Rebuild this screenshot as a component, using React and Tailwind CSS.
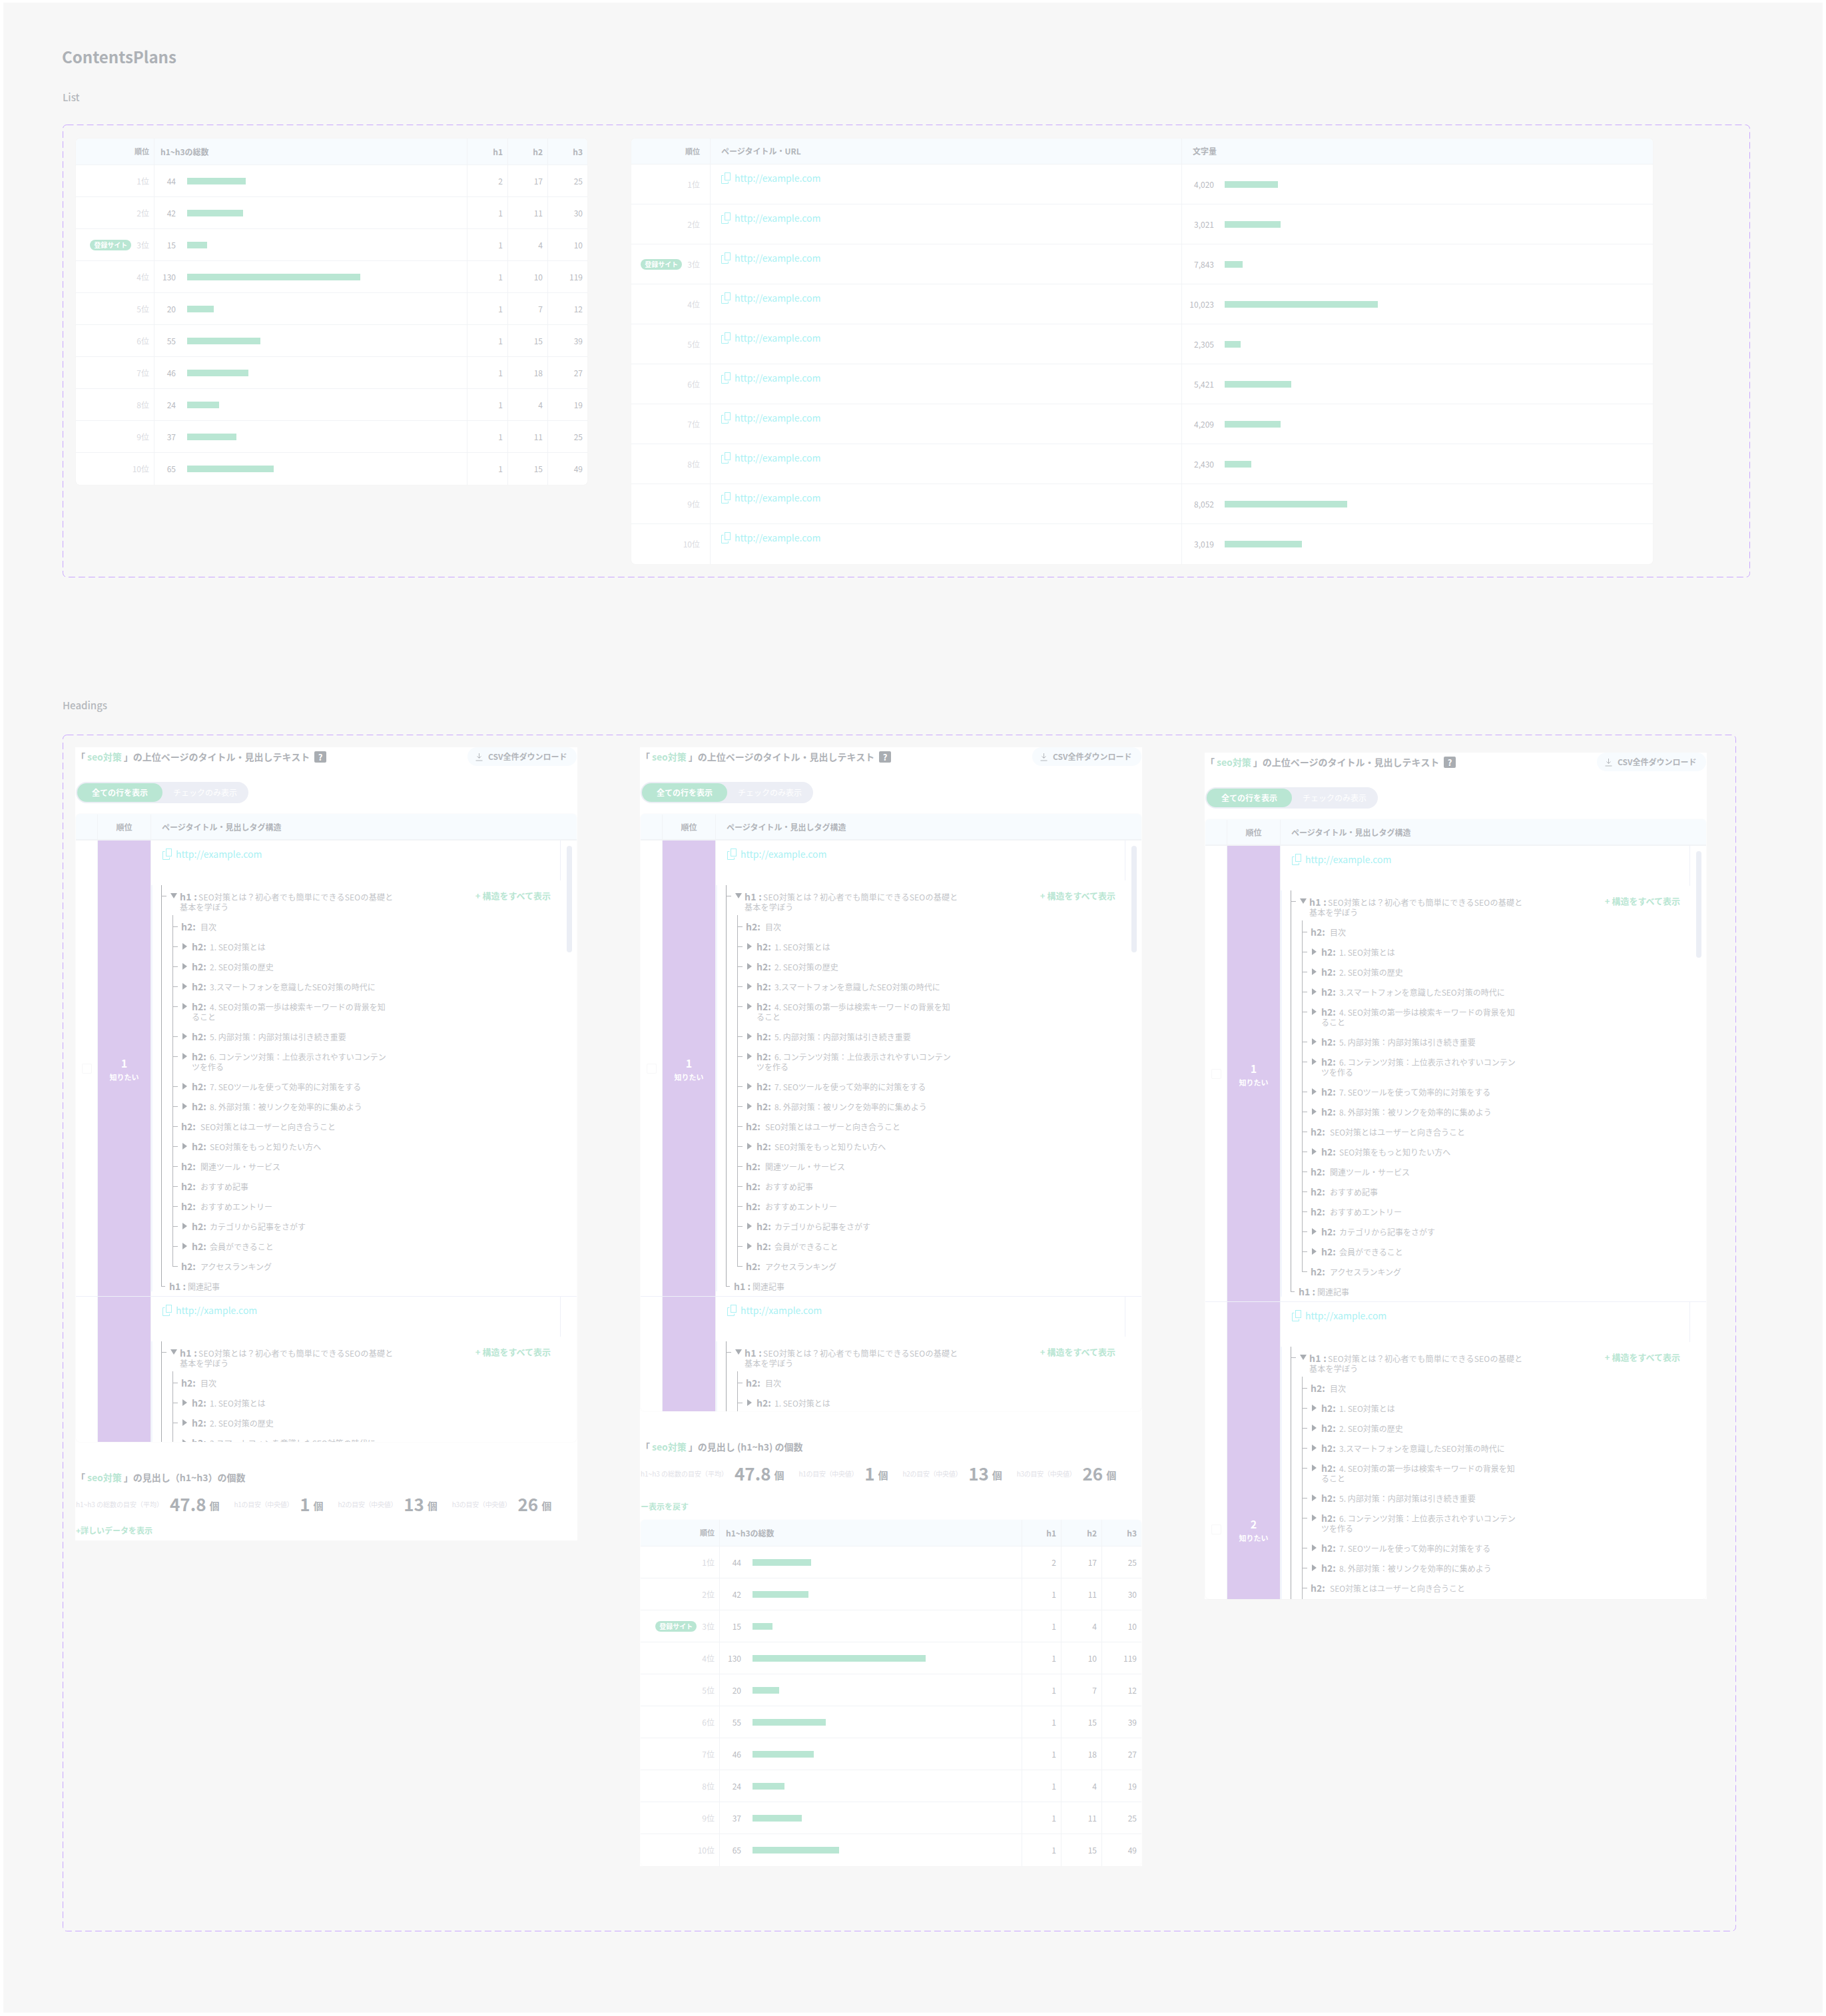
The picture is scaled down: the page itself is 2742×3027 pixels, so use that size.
import React from 'react';

const countRows = [
    { rank: 1, total: 44, h1: 2, h2: 17, h3: 25 },
    { rank: 2, total: 42, h1: 1, h2: 11, h3: 30 },
    { rank: 3, total: 15, h1: 1, h2: 4, h3: 10, own: true },
    { rank: 4, total: 130, h1: 1, h2: 10, h3: 119 },
    { rank: 5, total: 20, h1: 1, h2: 7, h3: 12 },
    { rank: 6, total: 55, h1: 1, h2: 15, h3: 39 },
    { rank: 7, total: 46, h1: 1, h2: 18, h3: 27 },
    { rank: 8, total: 24, h1: 1, h2: 4, h3: 19 },
    { rank: 9, total: 37, h1: 1, h2: 11, h3: 25 },
    { rank: 10, total: 65, h1: 1, h2: 15, h3: 49 },
];

const pageRows = [
    { rank: 1, chars: '4,020', bar: 80 },
    { rank: 2, chars: '3,021', bar: 84 },
    { rank: 3, chars: '7,843', bar: 27, own: true },
    { rank: 4, chars: '10,023', bar: 230 },
    { rank: 5, chars: '2,305', bar: 24 },
    { rank: 6, chars: '5,421', bar: 100 },
    { rank: 7, chars: '4,209', bar: 84 },
    { rank: 8, chars: '2,430', bar: 40 },
    { rank: 9, chars: '8,052', bar: 184 },
    { rank: 10, chars: '3,019', bar: 116 },
];

const h2Items = [
    { text: '目次' },
    { text: '1. SEO対策とは', more: true },
    { text: '2. SEO対策の歴史', more: true },
    { text: '3.スマートフォンを意識したSEO対策の時代に', more: true },
    { text: '4. SEO対策の第一歩は検索キーワードの背景を知ること', more: true },
    { text: '5. 内部対策：内部対策は引き続き重要', more: true },
    { text: '6. コンテンツ対策：上位表示されやすいコンテンツを作る', more: true },
    { text: '7. SEOツールを使って効率的に対策をする', more: true },
    { text: '8. 外部対策：被リンクを効率的に集めよう', more: true },
    { text: 'SEO対策とはユーザーと向き合うこと' },
    { text: 'SEO対策をもっと知りたい方へ', more: true },
    { text: '関連ツール・サービス' },
    { text: 'おすすめ記事' },
    { text: 'おすすめエントリー' },
    { text: 'カテゴリから記事をさがす', more: true },
    { text: '会員ができること', more: true },
    { text: 'アクセスランキング' },
];

const DashedFrame = () => (
    <svg className="absolute inset-0 w-full h-full overflow-visible pointer-events-none">
        <rect x="0.5" y="0.5" width="100%" height="100%" rx="6" fill="none" stroke="#c9a6ff" strokeDasharray="10 5" />
    </svg>
);

const Badge = () => (
    <span className="inline-flex items-center justify-center w-[62px] h-[16px] rounded-full bg-[#b9e6d3] text-white text-[10px] leading-none font-bold">登録サイト</span>
);

const LinkIcon = () => (
    <svg width="14" height="17" viewBox="0 0 14 17" fill="none" stroke="#a9f1f3" className="shrink-0">
        <path d="M3.5 4.5H.5V16.5H10.5V13.5" />
        <rect x="5.5" y="0.5" width="8" height="11" />
    </svg>
);

const UrlLink = ({ url }) => (
    <div className="flex items-center gap-[6px] text-[14px] leading-[20px] text-[#a9f1f3]">
        <LinkIcon />
        <span>{url}</span>
    </div>
);

const Cell = ({ className, children }) => (
    <div className={`flex items-center border-r border-[#f1f3f6] last:border-r-0 ${className}`}>{children}</div>
);

const CountTable = ({ cols }) => (
    <div className="w-full rounded-[6px] overflow-hidden bg-white shadow-[0_0_2px_rgba(0,0,0,0.04)]">
        <div className="flex h-[40px] bg-[#f7fbfe] border-b border-[#f1f3f6] text-[12px] font-bold text-[#b2b5ba]">
            <Cell className={`${cols[0]} justify-end pr-[7px] text-[11px]`}>順位</Cell>
            <Cell className={`${cols[1]} pl-[9px]`}>h1~h3の総数</Cell>
            <Cell className={`${cols[2]} justify-end pr-[7px]`}>h1</Cell>
            <Cell className={`${cols[3]} justify-end pr-[7px]`}>h2</Cell>
            <Cell className={`${cols[4]} justify-end pr-[7px]`}>h3</Cell>
        </div>
        {countRows.map((row) => (
            <div key={row.rank} className="flex h-[48px] border-b border-[#f1f3f6] last:border-b-0 text-[12px] text-[#b8babf]">
                <Cell className={`${cols[0]} justify-end gap-[8px] pr-[7px] text-[#d9dae0]`}>
                    {row.own && <Badge />}
                    <span>{row.rank}位</span>
                </Cell>
                <Cell className={cols[1]}>
                    <span className="w-[32px] text-right">{row.total}</span>
                    <span className="ml-[17px] h-[10px] bg-[#b9e6d3]" style={{ width: row.total * 2 }} />
                </Cell>
                <Cell className={`${cols[2]} justify-end pr-[7px]`}>{row.h1}</Cell>
                <Cell className={`${cols[3]} justify-end pr-[7px]`}>{row.h2}</Cell>
                <Cell className={`${cols[4]} justify-end pr-[7px]`}>{row.h3}</Cell>
            </div>
        ))}
    </div>
);

const PageTable = () => (
    <div className="w-[1534px] rounded-[6px] overflow-hidden bg-white shadow-[0_0_2px_rgba(0,0,0,0.04)]">
        <div className="flex h-[39px] bg-[#f7fbfe] border-b border-[#f1f3f6] text-[12px] font-bold text-[#b2b5ba]">
            <Cell className="w-[119px] justify-end pr-[15px] text-[11px]">順位</Cell>
            <Cell className="w-[708px] pl-[16px]">ページタイトル・URL</Cell>
            <Cell className="flex-1 pl-[16px]">文字量</Cell>
        </div>
        {pageRows.map((row) => (
            <div key={row.rank} className="flex h-[60px] border-b border-[#f1f3f6] last:border-b-0 text-[12px] text-[#b8babf]">
                <Cell className="w-[119px] justify-end gap-[8px] pr-[15px] text-[#d9dae0]">
                    {row.own && <Badge />}
                    <span>{row.rank}位</span>
                </Cell>
                <div className="w-[708px] pl-[16px] pt-[10px] border-r border-[#f1f3f6]">
                    <UrlLink url="http://example.com" />
                </div>
                <div className="flex-1 flex items-center">
                    <span className="w-[48px] text-right">{row.chars}</span>
                    <span className="ml-[16px] h-[10px] bg-[#b9e6d3]" style={{ width: row.bar }} />
                </div>
            </div>
        ))}
    </div>
);

const Triangle = ({ down }) => (
    <svg width={down ? 10 : 7} height={down ? 8 : 10} viewBox={down ? '0 0 10 8' : '0 0 7 10'} className="absolute fill-[#a9adb2]">
        <path d={down ? 'M0 0H10L5 8Z' : 'M0 0L7 5L0 10Z'} />
    </svg>
);

const Tick = () => <span className="absolute left-0 top-[7px] w-[8px] h-px bg-[#b4b6ba]" />;

const HeadingTree = () => (
    <ul className="relative ml-[13px] mt-[7px]">
        <span className="absolute left-0 top-0 bottom-[7px] w-px bg-[#a9abaf]" />
        <li className="relative pt-[10px]">
            <span className="absolute left-0 top-[16px] w-[8px] h-px bg-[#b4b6ba]" />
            <span className="absolute left-[14px] top-[12px]"><Triangle down /></span>
            <div className="flex justify-between items-start pl-[28px] pr-[15px]">
                <p className="w-[322px] text-[12px] tracking-[0.25px] leading-[15px] text-[#c2c4c8]">
                    <span className="inline-block w-[28px] text-[14px] font-bold text-[#b2b5ba]">h1 :</span>
                    SEO対策とは？初心者でも簡単にできるSEOの基礎と基本を学ぼう
                </p>
                <span className="-mt-[2px] text-[13px] leading-[15px] font-bold text-[#b9e6d3]">+ 構造をすべて表示</span>
            </div>
            <ul className="relative ml-[17px] mt-[5px] pt-[10px] flex flex-col gap-[15px]">
                <span className="absolute left-0 top-0 bottom-[7px] w-px bg-[#b4b6ba]" />
                {h2Items.map((item) => (
                    <li key={item.text} className="relative">
                        <Tick />
                        {item.more && <span className="absolute left-[15px] top-[2px]"><Triangle /></span>}
                        <p className={`text-[12px] leading-[15px] text-[#c2c4c8] ${item.more ? 'pl-[29px] w-[329px]' : 'pl-[13px]'}`}>
                            <span className={`inline-block text-[14px] font-bold text-[#b2b5ba] ${item.more ? 'w-[27px]' : 'w-[29px]'}`}>h2:</span>
                            {item.text}
                        </p>
                    </li>
                ))}
            </ul>
        </li>
        <li className="relative mt-[15px]">
            <span className="absolute left-0 top-[7px] w-[6px] h-px bg-[#b4b6ba]" />
            <p className="pl-[12px] text-[12px] leading-[15px] text-[#c2c4c8]">
                <span className="inline-block w-[28px] text-[14px] font-bold text-[#b2b5ba]">h1 :</span>
                関連記事
            </p>
        </li>
    </ul>
);

const HeadingRow = ({ rank, url, first }) => (
    <div className={`flex h-[684px] ${first ? '' : 'border-t border-[#eef0f8]'}`}>
        <div className="w-[33px] shrink-0 flex items-center justify-center border-r border-[#f1f3f6]">
            <span className="w-[15px] h-[15px] rounded-[2px] border border-[#f7f7f8]" />
        </div>
        <div className="w-[79px] shrink-0 pt-[4px] flex flex-col items-center justify-center bg-[#dbc9ee] text-white font-bold">
            <span className="text-[16px] leading-[20px]">{rank}</span>
            <span className="mt-[1px] text-[11px] leading-[20px]">知りたい</span>
        </div>
        <div className="flex-1 mr-[24px] border-l border-[#f1f3f6] min-w-0">
            <div className="h-[60px] pl-[17px] pt-[10px] border-r border-[#eef0f8]">
                <UrlLink url={url} />
            </div>
            <div className="border-l-2 border-[#f3f6fd]">
                <HeadingTree />
            </div>
        </div>
    </div>
);

const HeadingTable = ({ height }) => (
    <div className={`relative rounded-[6px] overflow-hidden bg-white shadow-[0_0_2px_rgba(0,0,0,0.05)] ${height}`}>
        <div className="flex h-[40px] pt-px bg-[#f7fbfe] border-b-2 border-[#f1f3f6] text-[12px] font-bold text-[#b2b5ba]">
            <div className="w-[33px] border-r border-[#f1f3f6]" />
            <div className="w-[80px] flex items-center justify-center border-r border-[#f1f3f6]">順位</div>
            <div className="pl-[16px] flex items-center">ページタイトル・見出しタグ構造</div>
        </div>
        <HeadingRow rank="1" url="http://example.com" first />
        <HeadingRow rank="2" url="http://xample.com" />
        <span className="absolute right-[7px] top-[48px] w-[8px] h-[160px] rounded-full bg-[#ebeef5]" />
    </div>
);

const Keyword = () => (
    <>「<span className="mx-[3px] text-[#b9e6d3]">seo対策</span>」</>
);

const Stat = ({ label, value, tight }) => (
    <div className="flex items-center">
        <span className={`text-[10px] text-[#dfe1e7] whitespace-nowrap ${tight ? 'tracking-[-0.3px]' : ''}`}>{label}</span>
        <span className="ml-[10px] text-[26px] leading-[30px] font-bold text-[#adb1b6]">{value}</span>
        <span className="ml-[5px] mt-[6px] text-[15px] leading-[24px] font-bold text-[#adb1b6]">個</span>
    </div>
);

const PanelHeader = () => (
    <>
        <div className="flex justify-between items-center h-[28px]">
            <h3 className="flex items-center text-[14px] font-bold text-[#b0b3b8]">
                <span><Keyword />の上位ページのタイトル・見出しテキスト</span>
                <span className="ml-[7px] w-[18px] h-[17px] rounded-[2px] bg-[#a9adb2] text-white text-[13px] leading-[17px] text-center">?</span>
            </h3>
            <button className="flex items-center gap-[8px] h-[28px] w-[164px] pl-[12px] rounded-full bg-[#f7fbfe] text-[12px] font-bold text-[#b2b5ba]">
                <svg width="11" height="13" viewBox="0 0 11 13" fill="none" stroke="#b2b5ba">
                    <path d="M5.5 1V8M2.5 5.5L5.5 8.5L8.5 5.5M0.5 12H10.5" />
                </svg>
                CSV全件ダウンロード
            </button>
        </div>
        <div className="mt-[24px] flex w-[259px] h-[32px] p-[2px] rounded-full bg-[#eceef5] text-[12px] font-bold text-white">
            <span className="w-[128px] flex items-center justify-center rounded-full bg-[#b9e6d3]">全ての行を表示</span>
            <span className="pl-[16px] flex items-center font-normal">チェックのみ表示</span>
        </div>
    </>
);

const StatsBlock = ({ fullWidth }) => (
    <>
        <h3 className="mt-[43px] text-[14px] leading-[20px] font-bold text-[#b0b3b8]">
            <Keyword />の見出し{fullWidth ? '（h1~h3）' : ' (h1~h3) '}の個数
        </h3>
        <div className="mt-[15px] flex gap-[22px]">
            <Stat label="h1~h3 の総数の目安（平均）" value="47.8" />
            <Stat label="h1の目安（中央値）" value="1" tight />
            <Stat label="h2の目安（中央値）" value="13" tight />
            <Stat label="h3の目安（中央値）" value="26" tight />
        </div>
    </>
);

const App = () => {
    return (
        <div className="w-[2742px] h-[3027px] bg-white pl-[5px] pt-[4px] font-['Noto_Sans_CJK_JP','Noto_Sans',sans-serif]">
            <div className="w-[2732px] h-[3018px] bg-[#f7f7f7] pl-[89px] pt-[64px]">
                <h1 className="-ml-px text-[24px] leading-[34px] font-bold text-[#adb1b6]">ContentsPlans</h1>
                <h2 className="mt-[34px] text-[15px] leading-[20px] font-medium text-[#b4b7bc]">List</h2>

                <section className="relative mt-[31px] w-[2533px] h-[679px] flex items-start gap-[66px] pl-[20px] pt-[21px]">
                    <DashedFrame />
                    <div className="w-[768px]">
                        <CountTable cols={['w-[118px]', 'w-[470px]', 'w-[61px]', 'w-[60px]', 'w-[59px]']} />
                    </div>
                    <PageTable />
                </section>

                <h2 className="mt-[183px] text-[15px] leading-[20px] font-medium text-[#b4b7bc]">Headings</h2>

                <section className="relative mt-[34px] w-[2512px] h-[1796px] flex items-start gap-[94px] pl-[19px] pt-[19px]">
                    <DashedFrame />
                    <div className="w-[754px] px-px bg-white">
                        <PanelHeader />
                        <div className="mt-[16px]"><HeadingTable height="h-[943px]" /></div>
                        <StatsBlock fullWidth />
                        <p className="mt-[17px] pb-[7px] text-[12px] leading-[16px] font-bold text-[#b9e6d3]">+詳しいデータを表示</p>
                    </div>
                    <div className="w-[754px] px-px bg-white">
                        <PanelHeader />
                        <div className="mt-[16px]"><HeadingTable height="h-[897px]" /></div>
                        <StatsBlock />
                        <p className="mt-[27px] text-[12px] leading-[16px] font-bold text-[#b9e6d3]">ー表示を戻す</p>
                        <div className="mt-[12px]">
                            <CountTable cols={['w-[119px]', 'w-[454px]', 'w-[59px]', 'w-[61px]', 'w-[59px]']} />
                        </div>
                    </div>
                    <div className="mt-[8px] w-[754px] px-px bg-white">
                        <PanelHeader />
                        <div className="mt-[16px]"><HeadingTable height="h-[1171px]" /></div>
                    </div>
                </section>
            </div>
        </div>
    );
};

export default App;
